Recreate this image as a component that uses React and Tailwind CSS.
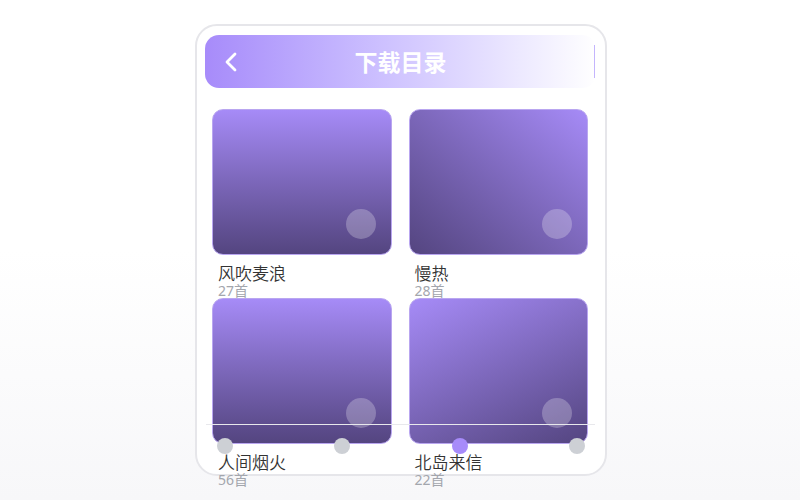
import React from "react";

const items = [
  { t: "风吹麦浪", n: "27首", g: "bg-linear-to-b" },
  { t: "慢热", n: "28首", g: "bg-linear-to-bl" },
  { t: "人间烟火", n: "56首", g: "bg-linear-to-b" },
  { t: "北岛来信", n: "22首", g: "bg-linear-[155deg]" },
];

function Card({ t, n, g }) {
  return (
    <div className="flex flex-col">
      <div className={`relative h-[146px] rounded-[11px] border border-[#b9a6f0] ${g} from-[#a68bf7] to-[#544580]`}>
        <div className="absolute right-[15px] bottom-[15px] w-[30px] h-[30px] rounded-full bg-white/25" />
      </div>
      <div className="pl-[6px] mt-[9px] text-[17px] leading-[20px] text-[#333]" style={{ fontWeight: 350 }}>{t}</div>
      <div className="pl-[6px] text-[14px] leading-[14px] text-[#a3a6ad]">{n}</div>
    </div>
  );
}

export default function App() {
  return (
    <div
      className="w-[800px] h-[500px] bg-linear-to-b from-white from-50% to-[#f7f7f9] pl-[195px] pt-[24px]"
      style={{ fontFamily: '"Noto Sans", "Noto Sans CJK SC", sans-serif' }}
    >
      <div className="relative w-[412px] h-[452px] rounded-[22px] border-2 border-[#e6e6ea] bg-white pl-[8px] pr-[9px] pt-[9px]">
        <div className="relative h-[53px] rounded-[14px] bg-linear-to-r from-[#a78bfa] to-white flex items-center justify-center">
          <svg className="absolute left-[17px] top-[16px]" width="18" height="22" viewBox="0 0 18 22" fill="none">
            <path d="M13 3 L5 11 L13 19" stroke="white" strokeWidth="2.8" strokeLinecap="round" strokeLinejoin="round" />
          </svg>
          <span className="text-white text-[23px] font-bold" style={{ fontFamily: '"Noto Sans CJK SC", sans-serif' }}>下载目录</span>
          <div className="absolute right-[1px] top-[10px] w-[1px] h-[33px] bg-[#c4b5fd]" />
        </div>
        <div className="grid grid-cols-2 gap-x-[17px] pl-[7px] pr-[8px] pt-[21px]">
          {items.map((it) => (
            <Card key={it.t} {...it} />
          ))}
        </div>
        <div className="absolute left-[9px] right-[10px] top-[398px] h-[1px] bg-[#e8e8ec]" />
        <div className="absolute left-[20px] top-[412px] w-[368px] flex justify-between">
          <div className="w-[16px] h-[16px] rounded-full bg-[#cdd0d5]" />
          <div className="w-[16px] h-[16px] rounded-full bg-[#cdd0d5]" />
          <div className="w-[16px] h-[16px] rounded-full bg-[#a78bfa]" />
          <div className="w-[16px] h-[16px] rounded-full bg-[#cdd0d5]" />
        </div>
      </div>
    </div>
  );
}
